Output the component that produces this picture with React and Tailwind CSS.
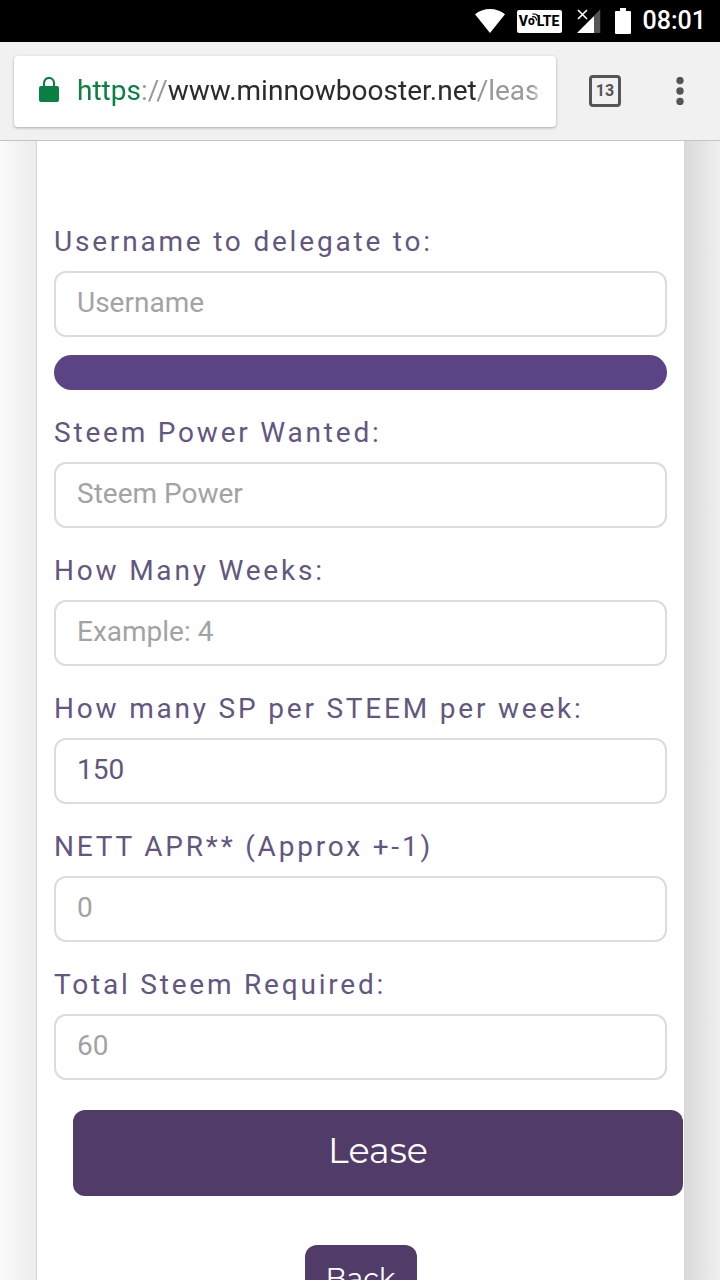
import { useState } from "react";

const fields = [
  { id: "steem-power", label: "Steem Power Wanted:", placeholder: "Steem Power" },
  { id: "weeks", label: "How Many Weeks:", placeholder: "Example: 4" },
  { id: "rate", label: "How many SP per STEEM per week:", value: "150" },
  { id: "apr", label: "NETT APR** (Approx +-1)", placeholder: "0" },
  { id: "total", label: "Total Steem Required:", placeholder: "60" },
];

function StatusBar() {
  return (
    <div className="flex h-[42px] shrink-0 items-center justify-end bg-black pr-[14px] text-white">
      <svg className="mr-3 h-6 w-[30px]" viewBox="0 0 30 24" fill="currentColor">
        <path d="M15 24 0 5.2C4 2 9.300 0 15 0s11 2 15 5.200z" />
      </svg>
      <div className="relative mr-[15px] flex h-[23px] w-[45px] items-center justify-center rounded-xs bg-white text-[14px] font-extrabold leading-none text-black">
        <span>V</span>
        <span className="text-xs">o</span>
        <span className="ml-[2px]">LTE</span>
        <svg
          className="absolute top-[3px] left-[14px] h-[9px] w-[9px]"
          viewBox="0 0 9 9"
          fill="none"
          stroke="currentColor"
          strokeWidth="1.200"
        >
          <path d="M1 4C3.500 3 5.500 4.500 5.500 7.500M1.500 1.200C5.500 .2 8 3 8 7" />
        </svg>
      </div>
      <svg className="mr-[14px] h-6 w-6" viewBox="0 0 24 24" fill="none">
        <path d="M17 0h6.500v24H17z" fill="#555" clipPath="url(#signal)" />
        <clipPath id="signal">
          <path d="M23.500 0v24H0z" />
        </clipPath>
        <path d="M17 7v17H0z" fill="#fff" />
        <path d="M1 1l9 9M10 1 1 10" stroke="#fff" strokeWidth="1.600" />
      </svg>
      <svg className="mr-3 h-[26px] w-4" viewBox="0 0 16 26" fill="currentColor">
        <path d="M5 0h6v3h4a1 1 0 0 1 1 1v21a1 1 0 0 1-1 1H1a1 1 0 0 1-1-1V4a1 1 0 0 1 1-1h4z" />
      </svg>
      <span className="text-[25px] font-medium">08:01</span>
    </div>
  );
}

function Toolbar() {
  return (
    <header className="flex h-[99px] shrink-0 items-center border-b border-[#c4c4c4] bg-[#f1f1f1] pr-[30px] pl-[14px]">
      <button
        type="button"
        aria-label="Edit address"
        className="flex h-[71px] min-w-0 flex-1 items-center rounded-sm bg-white pr-[14px] pl-[25px] text-left shadow-[0_1px_3px_rgba(0,0,0,0.3)]"
      >
        <svg className="mr-[18px] h-7 w-5 shrink-0" viewBox="0 0 20 28" fill="#0b8043">
          <rect y="9" width="20" height="16" rx="2" />
          <path d="M5 10V6a5 5 0 0 1 10 0v4" fill="none" stroke="#0b8043" strokeWidth="2.200" />
        </svg>
        <span className="min-w-0 flex-1 overflow-hidden mask-r-from-98% whitespace-nowrap text-[28px] text-[#999]">
          <span className="text-[#0b8043]">https</span>
          ://
          <span className="text-[#2b2b2b]">www.minnowbooster.net</span>
          /lease
        </span>
      </button>
      <button
        type="button"
        aria-label="Open tabs"
        className="ml-[33px] h-8 w-8 rounded-sm border-3 border-[#555] text-base leading-none font-bold text-[#555]"
      >
        13
      </button>
      <button type="button" aria-label="Menu" className="ml-[49px] w-5">
        <svg className="h-7 w-5" viewBox="0 0 20 28" fill="#555">
          <circle cx="10" cy="3.500" r="3.700" />
          <circle cx="10" cy="14" r="3.700" />
          <circle cx="10" cy="24.500" r="3.700" />
        </svg>
      </button>
    </header>
  );
}

function Field({ id, label, placeholder, value: initial = "" }) {
  const [value, setValue] = useState(initial);

  return (
    <div className="flex flex-col gap-[10px]">
      <label htmlFor={id} className="text-[28px] leading-[38px] tracking-widest text-[#635780]">
        {label}
      </label>
      <input
        id={id}
        type="text"
        value={value}
        placeholder={placeholder}
        onChange={(e) => setValue(e.target.value)}
        className="h-[66px] w-full rounded-xl border-2 border-[#dcdcdc] bg-white px-[21px] pb-1 text-[28px] text-[#635780] placeholder:text-[#a3a3a3]"
      />
    </div>
  );
}

export default function App() {
  return (
    <div className="flex h-screen flex-col overflow-hidden font-['Roboto',sans-serif]">
      <StatusBar />
      <Toolbar />
      <div className="flex min-h-0 flex-1">
        <div className="w-9 shrink-0 bg-linear-to-r from-[#fbfbfb] to-[#ececec]" />
        <main className="min-w-0 flex-1 overflow-hidden border-r border-l border-[#d6d6da] bg-white px-[17px] pt-[82px]">
          <form onSubmit={(e) => e.preventDefault()}>
            <Field
              id="username"
              label="Username to delegate to:"
              placeholder="Username"
            />
            <div className="mt-[18px] h-[35px] rounded-full bg-[#5a4485]" />
            <div className="mt-6 flex flex-col gap-6">
              {fields.map((field) => (
                <Field key={field.id} {...field} />
              ))}
            </div>
            <div className="-mr-4 mt-[30px] pl-[19px]">
              <button
                type="submit"
                className="h-[86px] w-full rounded-xl bg-[#513c69] pb-1 font-['Montserrat','Lato',sans-serif] text-[35px] font-normal text-white"
              >
                Lease
              </button>
            </div>
            <div className="mt-[49px] flex justify-center">
              <button
                type="button"
                className="h-[66px] w-28 rounded-xl bg-[#513c69] font-['Montserrat','Lato',sans-serif] text-[28px] font-normal text-white"
              >
                Back
              </button>
            </div>
          </form>
        </main>
        <div className="w-[35px] shrink-0 bg-linear-to-r from-[#dadada] to-[#efefef]" />
      </div>
    </div>
  );
}
